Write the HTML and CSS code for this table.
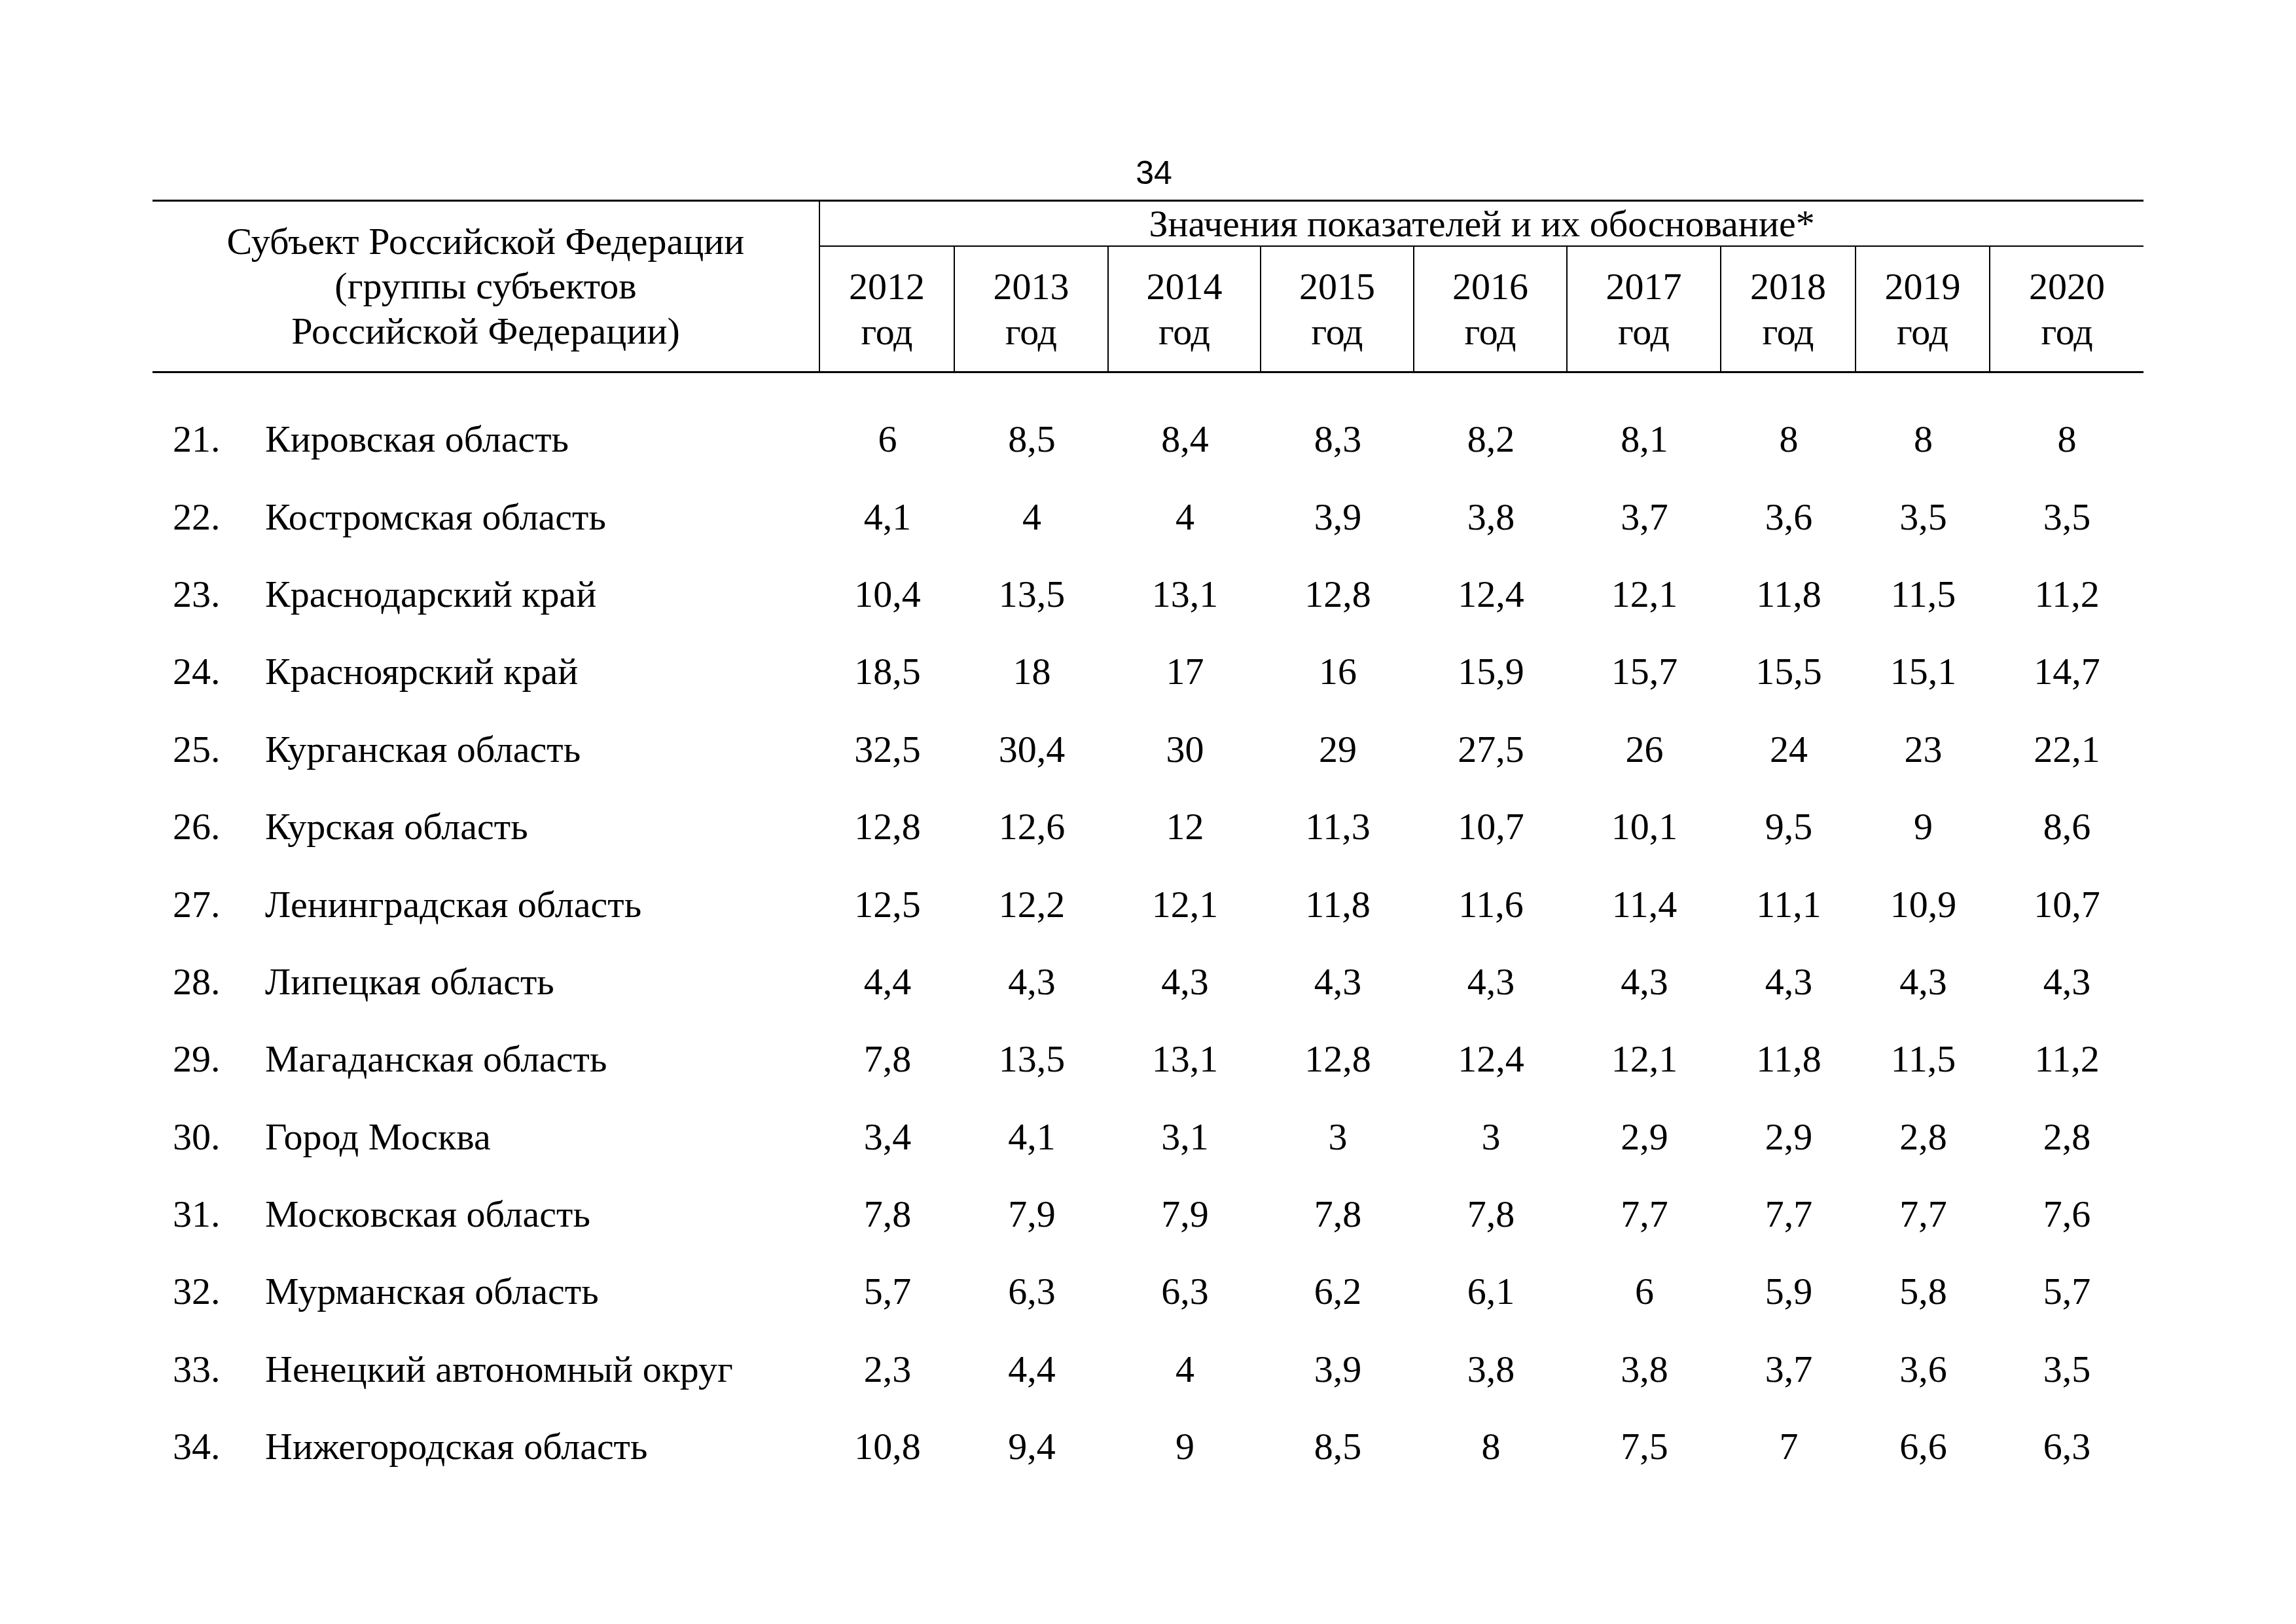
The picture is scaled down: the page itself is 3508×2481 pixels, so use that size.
FILE: index.html
```html
<!DOCTYPE html>
<html lang="ru">
<head>
<meta charset="utf-8">
<title>34</title>
<link rel="stylesheet" href="styles.css">
</head>
<body>
<div class="page">
  <div class="page-num">34</div>
  <table class="t">
    <colgroup>
      <col class="w-subj">
      <col class="w206"><col class="w235"><col class="w233"><col class="w234"><col class="w234"><col class="w235"><col class="w206"><col class="w205"><col class="w234">
    </colgroup>
    <thead>
      <tr class="h1">
        <th class="subj" rowspan="2">Субъект Российской Федерации<br>(группы субъектов<br>Российской Федерации)</th>
        <th class="group" colspan="9">Значения показателей и их обоснование*</th>
      </tr>
      <tr class="h2">
        <th class="yr">2012<br>год</th>
        <th class="yr">2013<br>год</th>
        <th class="yr">2014<br>год</th>
        <th class="yr">2015<br>год</th>
        <th class="yr">2016<br>год</th>
        <th class="yr">2017<br>год</th>
        <th class="yr">2018<br>год</th>
        <th class="yr">2019<br>год</th>
        <th class="yr last">2020<br>год</th>
      </tr>
    </thead>
    <tbody>
      <tr><td class="nm"><span class="no">21.</span>Кировская область</td><td>6</td><td>8,5</td><td>8,4</td><td>8,3</td><td>8,2</td><td>8,1</td><td>8</td><td>8</td><td>8</td></tr>
      <tr><td class="nm"><span class="no">22.</span>Костромская область</td><td>4,1</td><td>4</td><td>4</td><td>3,9</td><td>3,8</td><td>3,7</td><td>3,6</td><td>3,5</td><td>3,5</td></tr>
      <tr><td class="nm"><span class="no">23.</span>Краснодарский край</td><td>10,4</td><td>13,5</td><td>13,1</td><td>12,8</td><td>12,4</td><td>12,1</td><td>11,8</td><td>11,5</td><td>11,2</td></tr>
      <tr><td class="nm"><span class="no">24.</span>Красноярский край</td><td>18,5</td><td>18</td><td>17</td><td>16</td><td>15,9</td><td>15,7</td><td>15,5</td><td>15,1</td><td>14,7</td></tr>
      <tr><td class="nm"><span class="no">25.</span>Курганская область</td><td>32,5</td><td>30,4</td><td>30</td><td>29</td><td>27,5</td><td>26</td><td>24</td><td>23</td><td>22,1</td></tr>
      <tr><td class="nm"><span class="no">26.</span>Курская область</td><td>12,8</td><td>12,6</td><td>12</td><td>11,3</td><td>10,7</td><td>10,1</td><td>9,5</td><td>9</td><td>8,6</td></tr>
      <tr><td class="nm"><span class="no">27.</span>Ленинградская область</td><td>12,5</td><td>12,2</td><td>12,1</td><td>11,8</td><td>11,6</td><td>11,4</td><td>11,1</td><td>10,9</td><td>10,7</td></tr>
      <tr><td class="nm"><span class="no">28.</span>Липецкая область</td><td>4,4</td><td>4,3</td><td>4,3</td><td>4,3</td><td>4,3</td><td>4,3</td><td>4,3</td><td>4,3</td><td>4,3</td></tr>
      <tr><td class="nm"><span class="no">29.</span>Магаданская область</td><td>7,8</td><td>13,5</td><td>13,1</td><td>12,8</td><td>12,4</td><td>12,1</td><td>11,8</td><td>11,5</td><td>11,2</td></tr>
      <tr><td class="nm"><span class="no">30.</span>Город Москва</td><td>3,4</td><td>4,1</td><td>3,1</td><td>3</td><td>3</td><td>2,9</td><td>2,9</td><td>2,8</td><td>2,8</td></tr>
      <tr><td class="nm"><span class="no">31.</span>Московская область</td><td>7,8</td><td>7,9</td><td>7,9</td><td>7,8</td><td>7,8</td><td>7,7</td><td>7,7</td><td>7,7</td><td>7,6</td></tr>
      <tr><td class="nm"><span class="no">32.</span>Мурманская область</td><td>5,7</td><td>6,3</td><td>6,3</td><td>6,2</td><td>6,1</td><td>6</td><td>5,9</td><td>5,8</td><td>5,7</td></tr>
      <tr><td class="nm"><span class="no">33.</span>Ненецкий автономный округ</td><td>2,3</td><td>4,4</td><td>4</td><td>3,9</td><td>3,8</td><td>3,8</td><td>3,7</td><td>3,6</td><td>3,5</td></tr>
      <tr><td class="nm"><span class="no">34.</span>Нижегородская область</td><td>10,8</td><td>9,4</td><td>9</td><td>8,5</td><td>8</td><td>7,5</td><td>7</td><td>6,6</td><td>6,3</td></tr>
    </tbody>
  </table>
</div>
</body>
</html>
```

FILE: styles.css
```css
html, body {
  margin: 0;
  padding: 0;
  background: #fff;
  color: #000;
}

.page {
  width: 3508px;
  height: 2481px;
  padding-top: 234px;
  box-sizing: border-box;
  font-family: "Liberation Serif", "Times New Roman", serif;
  font-size: 58px;
}

.page-num {
  margin-left: 233px;
  width: 3042px;
  padding-left: 18px;
  box-sizing: border-box;
  text-align: center;
  font-family: "Liberation Sans", Arial, sans-serif;
  font-size: 50px;
  line-height: 60px;
  height: 60px;
  margin-bottom: 11px;
}

.t {
  margin-left: 233px;
  width: 3042px;
  table-layout: fixed;
  border-collapse: separate;
  border-spacing: 0;
  border-top: 3px solid #000;
}

.w-subj { width: 1020px; }
.w206 { width: 206px; }
.w235 { width: 235px; }
.w233 { width: 233px; }
.w234 { width: 234px; }
.w205 { width: 205px; }

th {
  font-weight: normal;
  padding: 0;
  text-align: center;
  vertical-align: middle;
}

.subj {
  line-height: 68.5px;
  border-right: 2px solid #000;
  border-bottom: 3px solid #000;
}

.h1 { height: 69px; }
.h2 { height: 193px; }

.group {
  line-height: 60px;
  border-bottom: 2px solid #000;
  padding-left: 0;
}

.yr {
  line-height: 69px;
  border-right: 2px solid #000;
  border-bottom: 3px solid #000;
}

.yr.last { border-right: none; }

tbody tr { height: 118.4px; }

td {
  padding: 0;
  text-align: center;
  vertical-align: middle;
  line-height: 66px;
  white-space: nowrap;
}

tbody tr:first-child td { padding-top: 42px; }
tbody tr:first-child { height: 160.4px; }

td.nm {
  text-align: left;
  padding-left: 31px;
}

.no {
  display: inline-block;
  width: 141px;
}
```
